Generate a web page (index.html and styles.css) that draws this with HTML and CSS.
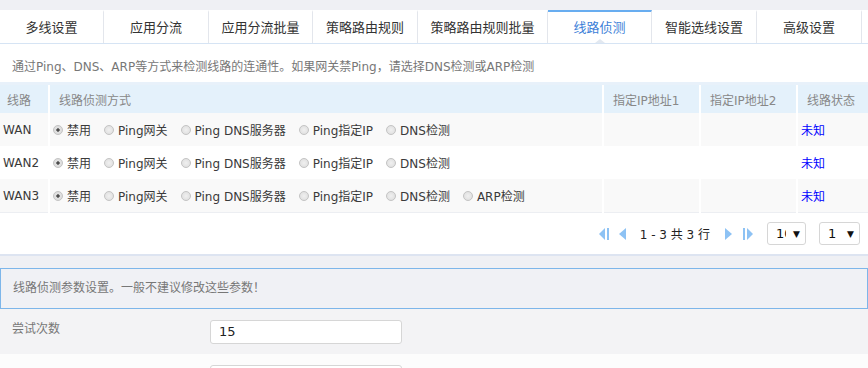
FILE: index.html
```html
<!DOCTYPE html>
<html lang="zh-CN">

<head>
    <meta charset="UTF-8">
    <meta name="viewport" content="width=device-width, initial-scale=1.0">
    <title>线路侦测</title>
    <link rel="stylesheet" href="styles.css">
</head>

<body>
    <div class="panel">
        <ul class="tabs">
            <li>多线设置</li>
            <li class="w105">应用分流</li>
            <li>应用分流批量</li>
            <li class="w105">策略路由规则</li>
            <li class="wide">策略路由规则批量</li>
            <li class="active">线路侦测</li>
            <li class="w105">智能选线设置</li>
            <li class="w105">高级设置</li>
        </ul>

        <p class="tip">通过Ping、DNS、ARP等方式来检测线路的连通性。如果网关禁Ping，请选择DNS检测或ARP检测</p>

        <table class="grid">
            <colgroup>
                <col class="c-line">
                <col class="c-mode">
                <col class="c-ip">
                <col class="c-ip">
                <col>
            </colgroup>
            <thead>
                <tr>
                    <th class="first">线路</th>
                    <th>线路侦测方式</th>
                    <th>指定IP地址1</th>
                    <th>指定IP地址2</th>
                    <th>线路状态</th>
                </tr>
            </thead>
            <tbody>
                <tr>
                    <td>WAN</td>
                    <td>
                        <div class="opts">
                            <label class="opt"><input type="radio" name="wan1" checked>禁用</label>
                            <label class="opt"><input type="radio" name="wan1">Ping网关</label>
                            <label class="opt"><input type="radio" name="wan1">Ping DNS服务器</label>
                            <label class="opt"><input type="radio" name="wan1">Ping指定IP</label>
                            <label class="opt"><input type="radio" name="wan1">DNS检测</label>
                        </div>
                    </td>
                    <td></td>
                    <td></td>
                    <td class="state">未知</td>
                </tr>
                <tr>
                    <td>WAN2</td>
                    <td>
                        <div class="opts">
                            <label class="opt"><input type="radio" name="wan2" checked>禁用</label>
                            <label class="opt"><input type="radio" name="wan2">Ping网关</label>
                            <label class="opt"><input type="radio" name="wan2">Ping DNS服务器</label>
                            <label class="opt"><input type="radio" name="wan2">Ping指定IP</label>
                            <label class="opt"><input type="radio" name="wan2">DNS检测</label>
                        </div>
                    </td>
                    <td></td>
                    <td></td>
                    <td class="state">未知</td>
                </tr>
                <tr>
                    <td>WAN3</td>
                    <td>
                        <div class="opts">
                            <label class="opt"><input type="radio" name="wan3" checked>禁用</label>
                            <label class="opt"><input type="radio" name="wan3">Ping网关</label>
                            <label class="opt"><input type="radio" name="wan3">Ping DNS服务器</label>
                            <label class="opt"><input type="radio" name="wan3">Ping指定IP</label>
                            <label class="opt"><input type="radio" name="wan3">DNS检测</label>
                            <label class="opt"><input type="radio" name="wan3">ARP检测</label>
                        </div>
                    </td>
                    <td></td>
                    <td></td>
                    <td class="state">未知</td>
                </tr>
            </tbody>
        </table>

        <div class="pager">
            <svg class="pg-icon" width="12" height="12" viewBox="0 0 12 12">
                <polygon points="7,0 7,12 1,6" />
                <rect x="9" y="0" width="2" height="12" />
            </svg>
            <svg class="pg-icon" width="12" height="12" viewBox="0 0 12 12">
                <polygon points="10,0 10,12 3,6" />
            </svg>
            <span class="pg-text">1 - 3 共 3 行</span>
            <svg class="pg-icon" width="12" height="12" viewBox="0 0 12 12">
                <polygon points="1,0 1,12 8,6" />
            </svg>
            <svg class="pg-icon last" width="12" height="12" viewBox="0 0 12 12">
                <rect x="1" y="0" width="2" height="12" />
                <polygon points="5,0 5,12 11,6" />
            </svg>
            <div class="select"><span class="val">10</span><span class="arrow">▼</span></div>
            <div class="select"><span class="val">1</span><span class="arrow">▼</span></div>
        </div>
    </div>

    <div class="notice">线路侦测参数设置。一般不建议修改这些参数！</div>

    <div class="form-row">
        <label class="form-label">尝试次数</label>
        <input class="form-input" type="text" value="15">
    </div>
    <div class="form-row alt">
        <label class="form-label"></label>
        <input class="form-input" type="text" value="">
    </div>
</body>

</html>
```

FILE: styles.css
```css
body {
    margin: 0;
    background-color: #eff0f4;
    font-family: "DejaVu Sans", "Noto Sans CJK SC", sans-serif;
    font-size: 12px;
    color: #333;
}

.panel {
    margin-top: 10px;
    background: #fff;
    border-bottom: 2px solid #dde4f1;
}

/* tabs */
.tabs {
    display: flex;
    list-style: none;
    margin: 0;
    padding: 0;
    height: 33px;
    border-bottom: 1px solid #d6e4f4;
}

.tabs li {
    position: relative;
    width: 104px;
    box-sizing: border-box;
    border-right: 1px solid #e3e6ec;
    text-align: center;
    line-height: 31px;
    font-size: 13px;
    color: #333;
    border-top: 2px solid transparent;
}

.tabs li.w105 {
    width: 105px;
}

.tabs li.wide {
    width: 130px;
}

.tabs li.active {
    color: #3d7fd8;
    border-top-color: #68adf0;
}

.tabs li.active::after {
    content: "";
    position: absolute;
    left: 50%;
    bottom: 0;
    margin-left: -5px;
    border-left: 5px solid transparent;
    border-right: 5px solid transparent;
    border-bottom: 4px solid #e2e8f0;
}

.tip {
    margin: 0;
    padding: 16px 12px 8px;
    line-height: 14px;
    color: #777;
}

/* grid */
.grid {
    width: 100%;
    table-layout: fixed;
    border-collapse: collapse;
    border-top: 3px solid #e8f1fa;
    border-bottom: 1px solid #eceef2;
}

.grid col.c-line {
    width: 49px;
}

.grid col.c-mode {
    width: 554px;
}

.grid col.c-ip {
    width: 97px;
}

.grid th {
    height: 28px;
    background: #e4f1fb;
    color: #888;
    font-weight: normal;
    text-align: left;
    padding: 0 9px;
    border-right: 2px solid #fff;
    white-space: nowrap;
}

.grid th.first {
    padding-left: 7px;
}

.grid th:last-child {
    border-right: none;
}

.grid td {
    height: 33px;
    padding: 0 3px;
    border-right: 2px solid #fff;
    white-space: nowrap;
    color: #3a3a3a;
}

.grid td:last-child {
    border-right: none;
}

.grid tbody tr:nth-child(odd) td {
    background: #f9f9f9;
}

.grid td.state {
    color: #0000ff;
}

.opts {
    display: flex;
    align-items: center;
    gap: 13px;
}

.opt {
    display: flex;
    align-items: center;
}

.opt input {
    appearance: none;
    width: 10px;
    height: 10px;
    margin: 0 4px 0 0;
    border: 1px solid #c4c4c4;
    border-radius: 50%;
    background: radial-gradient(circle, #f0f0f0 0, #dcdcdc 100%);
    box-sizing: border-box;
}

.opt input:checked {
    background: radial-gradient(circle, #444 0, #555 25%, #e2e2e2 35%, #d8d8d8 100%);
}

/* pager */
.pager {
    display: flex;
    align-items: center;
    justify-content: flex-end;
    height: 41px;
    padding-right: 8px;
}

.pg-icon {
    fill: #8dc2f4;
    margin-right: 6px;
}

.pg-icon.last {
    margin-right: 0;
}

.pg-text {
    margin: 0 14px 0 6px;
    color: #222;
}

.select {
    display: flex;
    align-items: center;
    justify-content: space-between;
    width: 39px;
    height: 23px;
    box-sizing: border-box;
    margin-left: 13px;
    padding: 0 5px 0 8px;
    border: 1px solid #d6d6d6;
    border-radius: 3px;
    overflow: hidden;
    font-size: 13px;
    color: #111;
}

.select .val {
    width: 10px;
    overflow: hidden;
    white-space: nowrap;
}

.select .arrow {
    font-size: 9px;
}

.select + .select {
    width: 41px;
}

/* params */
.notice {
    margin-top: 12px;
    height: 39px;
    line-height: 39px;
    padding-left: 12px;
    border: 1px solid #7db6ea;
    background: #f0f1f5;
    color: #777;
}

.form-row {
    display: flex;
    align-items: center;
    height: 45px;
    background: #f3f3f5;
}

.form-row.alt {
    background: #fcfcfc;
}

.form-label {
    width: 198px;
    padding-left: 12px;
    margin-top: -8px;
    color: #777;
}

.form-input {
    width: 192px;
    height: 24px;
    box-sizing: border-box;
    border: 1px solid #d6d6d6;
    border-radius: 3px;
    padding: 0 8px;
    font-family: "DejaVu Sans", sans-serif;
    font-size: 13px;
    color: #222;
}
```
